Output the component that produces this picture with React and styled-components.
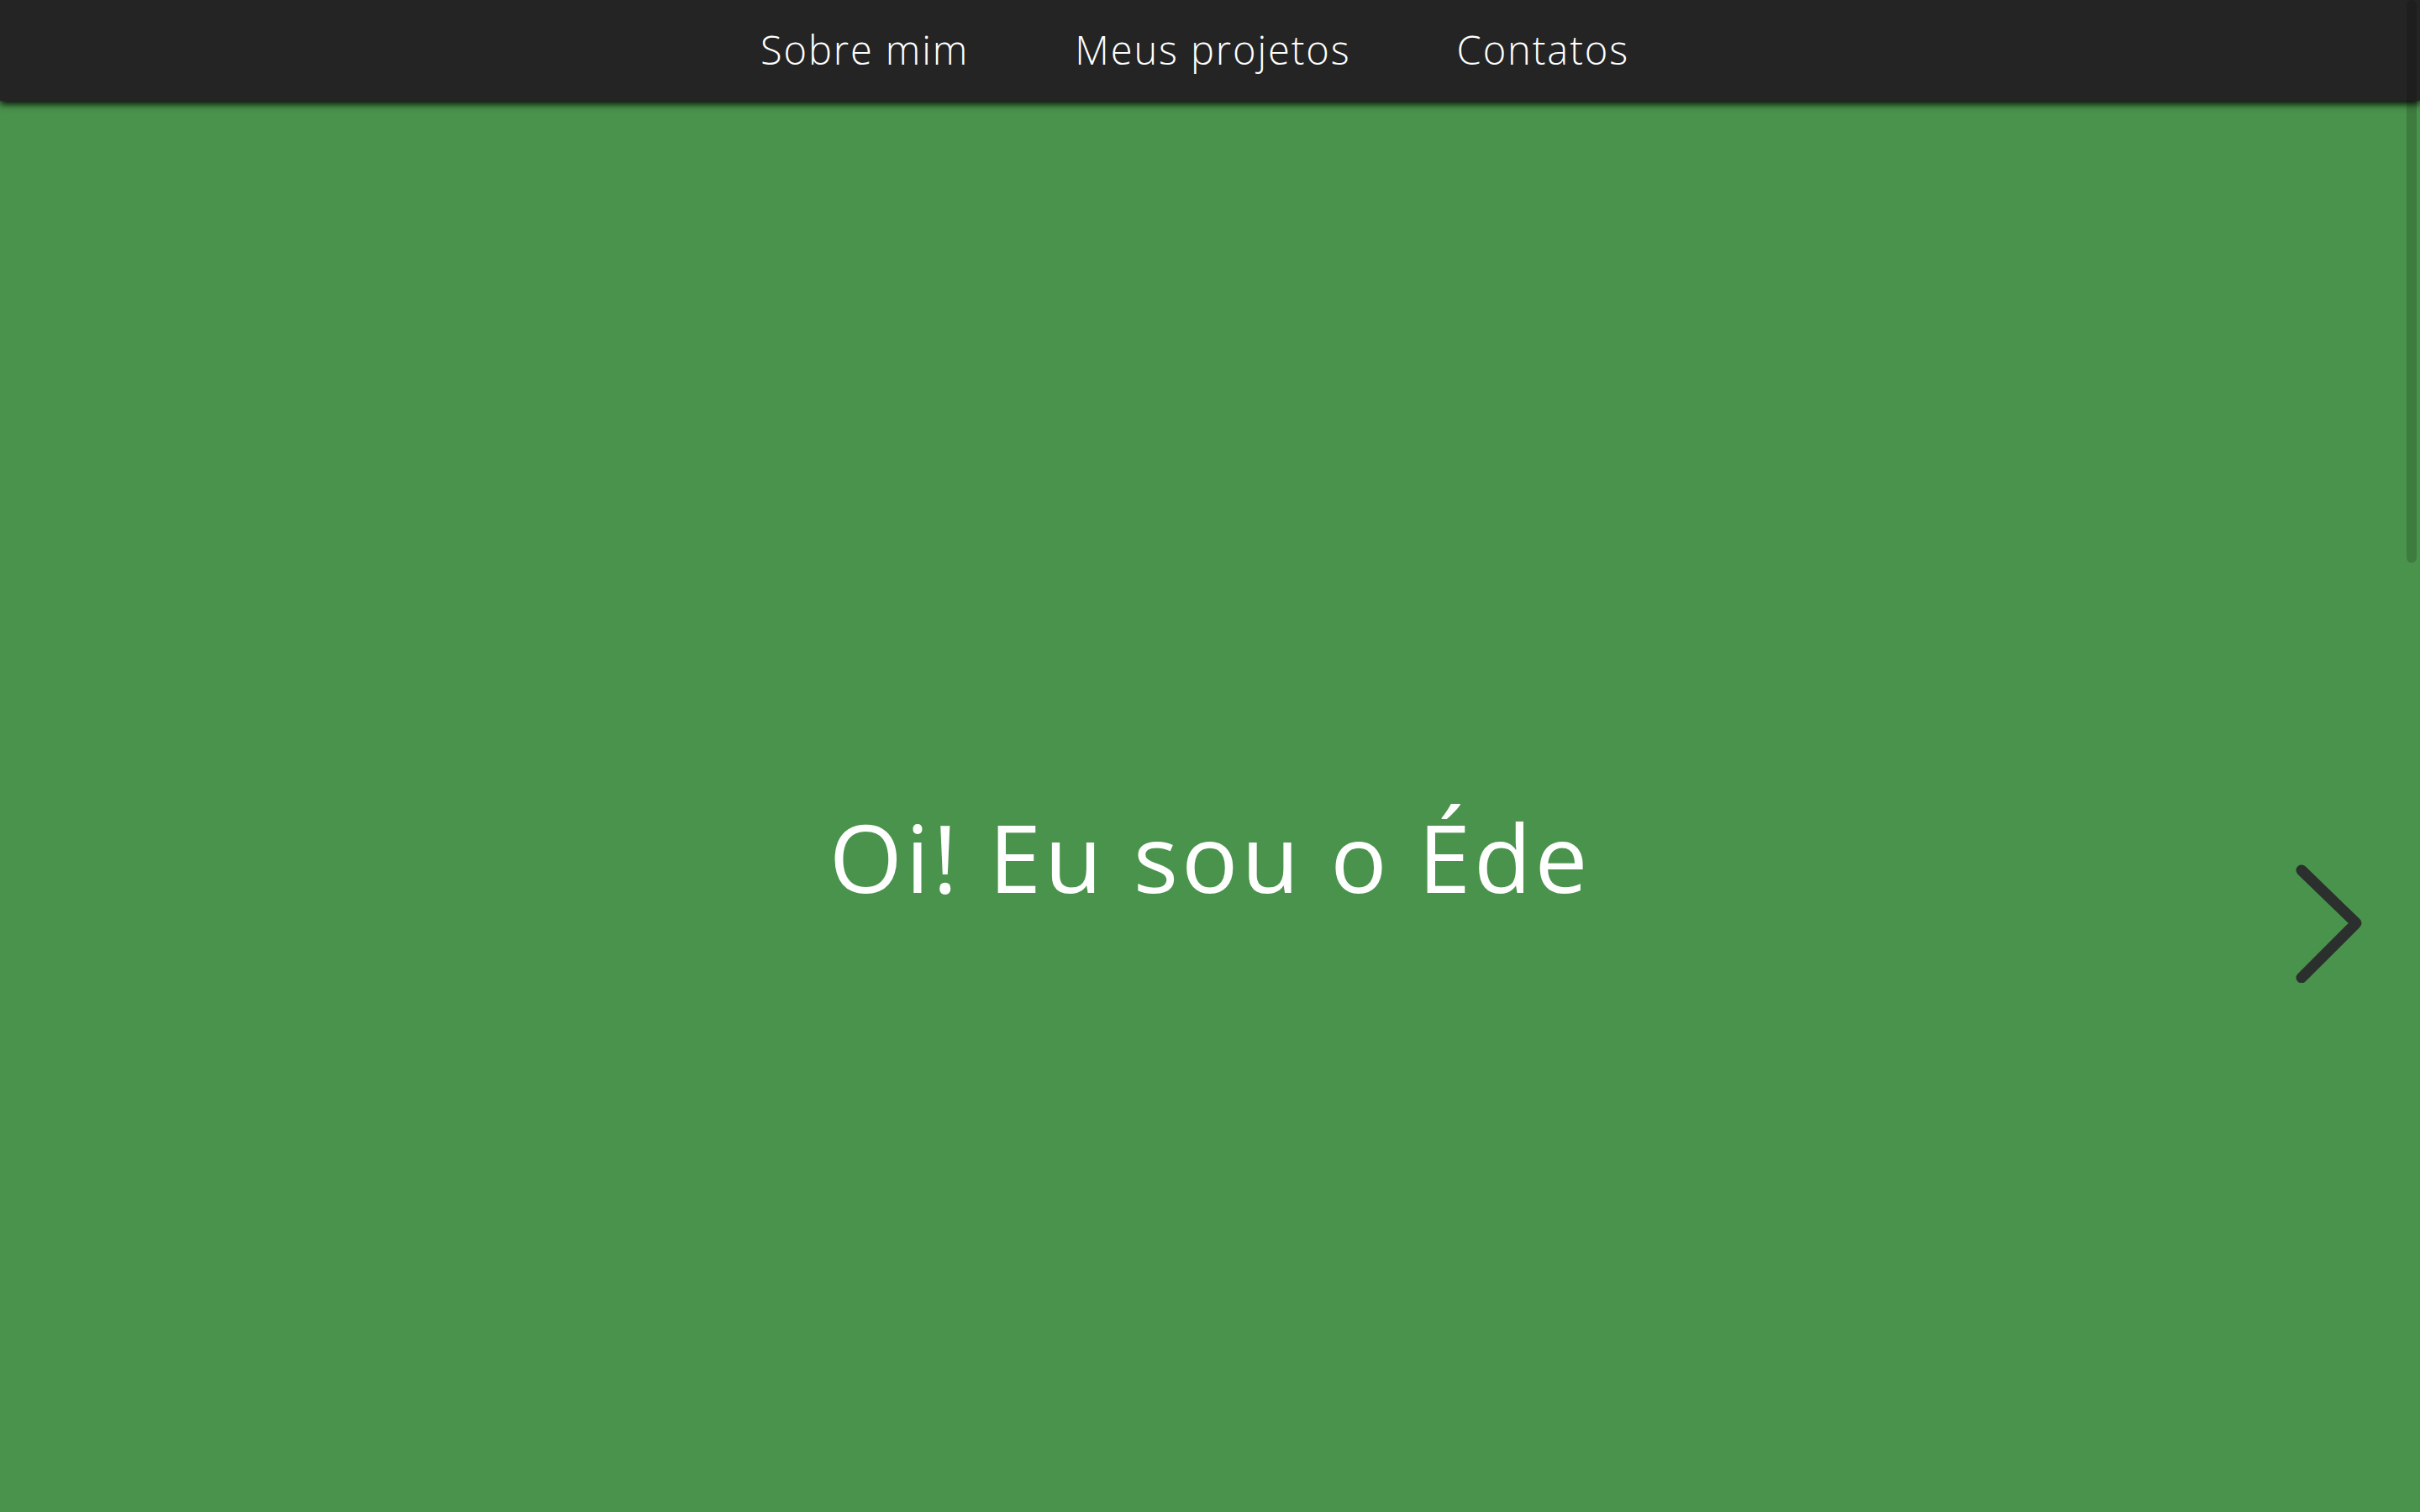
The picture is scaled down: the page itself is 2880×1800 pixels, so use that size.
import React from "react";
import styled, { createGlobalStyle } from "styled-components";

const Global = createGlobalStyle`
  html { scrollbar-width: none; }
  html::-webkit-scrollbar { display: none; }
  html, body { margin: 0; padding: 0; }
  body {
    background: #4a934c;
    font-family: "Open Sans", "Lato", sans-serif;
    color: #ffffff;
  }
`;

const Page = styled.div`
  display: flex;
  flex-direction: column;
`;

const NavBar = styled.nav`
  position: relative;
  z-index: 2;
  height: 120px;
  background: #242424;
  box-shadow: 0 4px 8px rgba(0, 0, 0, 0.9);
  display: flex;
  align-items: center;
  justify-content: center;
  gap: 126px;
  padding-right: 36px;
`;

const NavLink = styled.a`
  color: #ffffff;
  text-decoration: none;
  font-size: 47px;
  font-weight: 300;
  letter-spacing: 1.9px;
  line-height: 1;
  padding-bottom: 2px;
`;

const Hero = styled.section`
  position: relative;
  height: 100vh;
  display: flex;
  align-items: center;
  justify-content: center;
`;

const Title = styled.h1`
  margin: 0;
  font-size: 112px;
  font-weight: 400;
  letter-spacing: 4px;
  color: #ffffff;
  line-height: 1;
`;

const NextArrow = styled.button`
  position: absolute;
  right: 67px;
  top: 900px;
  width: 90px;
  height: 150px;
  padding: 0;
  border: 0;
  background: transparent;
  cursor: pointer;
`;

const ScrollThumb = styled.div`
  position: fixed;
  top: 0;
  right: 4px;
  width: 12px;
  height: 670px;
  border-radius: 6px;
  background: rgba(0, 0, 0, 0.16);
  z-index: 5;
`;

export default function App() {
  return (
    <Page>
      <Global />
      <NavBar>
        <NavLink href="#sobre">Sobre mim</NavLink>
        <NavLink href="#projetos">Meus projetos</NavLink>
        <NavLink href="#contatos">Contatos</NavLink>
      </NavBar>
      <Hero>
        <Title>Oi! Eu sou o Éde</Title>
        <NextArrow aria-label="Próximo">
          <svg width="90" height="150" viewBox="0 0 90 150">
            <polyline
              points="16,16 81,79 16,144"
              fill="none"
              stroke="#2b2f2d"
              strokeWidth="13"
              strokeLinecap="round"
              strokeLinejoin="round"
            />
          </svg>
        </NextArrow>
      </Hero>
      <ScrollThumb />
    </Page>
  );
}
